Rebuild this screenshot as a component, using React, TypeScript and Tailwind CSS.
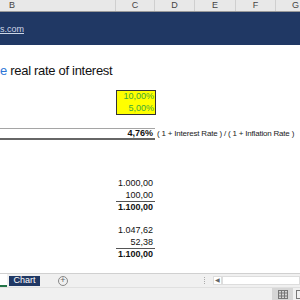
import React from 'react';

const cols = [
  { label: 'B', w: 'w-[116px]', align: 'justify-start pl-[9px]' },
  { label: 'C', w: 'w-[39px]', align: 'justify-center' },
  { label: 'D', w: 'w-[40px]', align: 'justify-center' },
  { label: 'E', w: 'w-[41px]', align: 'justify-center' },
  { label: 'F', w: 'w-[40px]', align: 'justify-center' },
  { label: 'G', w: 'w-[40px]', align: 'justify-center' },
];

function NumRow({ value, bold, line }: { value: string; bold?: boolean; line?: boolean }) {
  return (
    <div className="flex h-[12px]">
      <div className="w-[116px] shrink-0" />
      <div
        className={`w-[39px] shrink-0 flex items-center justify-end pr-[2px] text-[9px] text-[#111] ${bold ? 'font-bold' : ''} ${line ? 'border-b border-[#555]' : ''}`}
      >
        {value}
      </div>
    </div>
  );
}

export default function App() {
  return (
    <div
      className="w-[300px] h-[300px] overflow-hidden bg-white flex flex-col"
      style={{ fontFamily: '"Liberation Sans", Arial, sans-serif' }}
    >
      {/* column headers */}
      <div className="flex h-[12px] bg-[#e8e8e8] border-b border-[#9a9a9a] shrink-0">
        {cols.map((c) => (
          <div
            key={c.label}
            className={`${c.w} shrink-0 flex items-center ${c.align} text-[9px] text-[#444] border-r border-[#cfcfcf]`}
          >
            {c.label}
          </div>
        ))}
      </div>

      {/* banner */}
      <div className="h-[33px] bg-[#203864] flex items-center shrink-0">
        <span className="text-[9px] text-[#cdd6e6] underline leading-none mt-[2px]">s.com</span>
      </div>

      {/* content */}
      <div className="flex-1 flex flex-col">
        <div className="h-[14px]" />
        <div className="h-[22px] flex items-center text-[13px] tracking-[-0.3px] text-[#111] leading-none">
          <span className="text-[#2e75d6]">e</span>
          <span>&nbsp;real rate of interest</span>
        </div>
        <div className="h-[9px]" />

        {/* inputs */}
        <div className="flex">
          <div className="w-[116px] shrink-0" />
          <div className="w-[40px] shrink-0 bg-[#ffff00] border border-[#333] flex flex-col text-[9px] text-[#3ca83c]">
            <div className="h-[12px] flex items-center justify-end pr-[1px]">10,00%</div>
            <div className="h-[11px] flex items-center justify-end pr-[1px]">5,00%</div>
          </div>
        </div>

        <div className="h-[13px]" />

        {/* result */}
        <div className="flex items-center h-[12px]">
          <div className="w-[155px] shrink-0 h-full border-t border-[#a5a5a5] border-b-2 border-b-[#666] flex items-center justify-end pr-[2px] text-[9px] font-bold text-[#111]">
            4,76%
          </div>
          <div className="pl-[2px] text-[8px] tracking-[-0.2px] text-[#222] whitespace-nowrap">
            ( 1 + Interest Rate ) / ( 1 + Inflation Rate )
          </div>
        </div>

        <div className="h-[38px]" />
        <NumRow value="1.000,00" />
        <NumRow value="100,00" line />
        <NumRow value="1.100,00" bold />
        <div className="h-[11px]" />
        <NumRow value="1.047,62" />
        <NumRow value="52,38" line />
        <NumRow value="1.100,00" bold />
      </div>

      {/* sheet tabs */}
      <div className="h-[14px] bg-[#f0f0f0] border-t border-[#d0d0d0] flex items-center shrink-0">
        <div className="w-[7px] h-full bg-white border-b-2 border-[#217346]" />
        <div className="ml-[2px] w-[31px] h-[10px] bg-[#203864] text-white text-[9px] flex items-center justify-center">
          Chart
        </div>
        <div className="ml-[18px] w-[10px] h-[10px] rounded-full border border-[#888] flex items-center justify-center text-[9px] leading-none text-[#666]">
          +
        </div>
        <div className="ml-[136px] flex flex-col gap-[1px]">
          <div className="w-[1px] h-[1px] bg-[#aaa]" />
          <div className="w-[1px] h-[1px] bg-[#aaa]" />
          <div className="w-[1px] h-[1px] bg-[#aaa]" />
          <div className="w-[1px] h-[1px] bg-[#aaa]" />
        </div>
        <div className="ml-[8px] w-[9px] h-[9px] bg-white border border-[#ddd] flex items-center justify-center text-[6px] text-[#666]">
          ◀
        </div>
        <div className="flex-1 h-[9px] bg-white border border-[#ddd]" />
      </div>

      {/* status bar */}
      <div className="h-[13px] bg-[#f0f0f0] border-t border-[#e0e0e0] flex items-center justify-end shrink-0">
        <div className="w-[21px] h-full bg-[#d6d6d6] flex items-center justify-center">
          <svg width="10" height="9" viewBox="0 0 10 9" fill="none" stroke="#777" strokeWidth="1">
            <rect x="0.5" y="0.5" width="9" height="8" />
            <line x1="3.5" y1="0.5" x2="3.5" y2="8.5" />
            <line x1="6.5" y1="0.5" x2="6.5" y2="8.5" />
            <line x1="0.5" y1="3" x2="9.5" y2="3" />
            <line x1="0.5" y1="6" x2="9.5" y2="6" />
          </svg>
        </div>
        <div className="w-[7px] h-full flex items-center justify-end">
          <div className="w-[4px] h-[9px] border-l border-t border-b border-[#777]" />
        </div>
      </div>
    </div>
  );
}
